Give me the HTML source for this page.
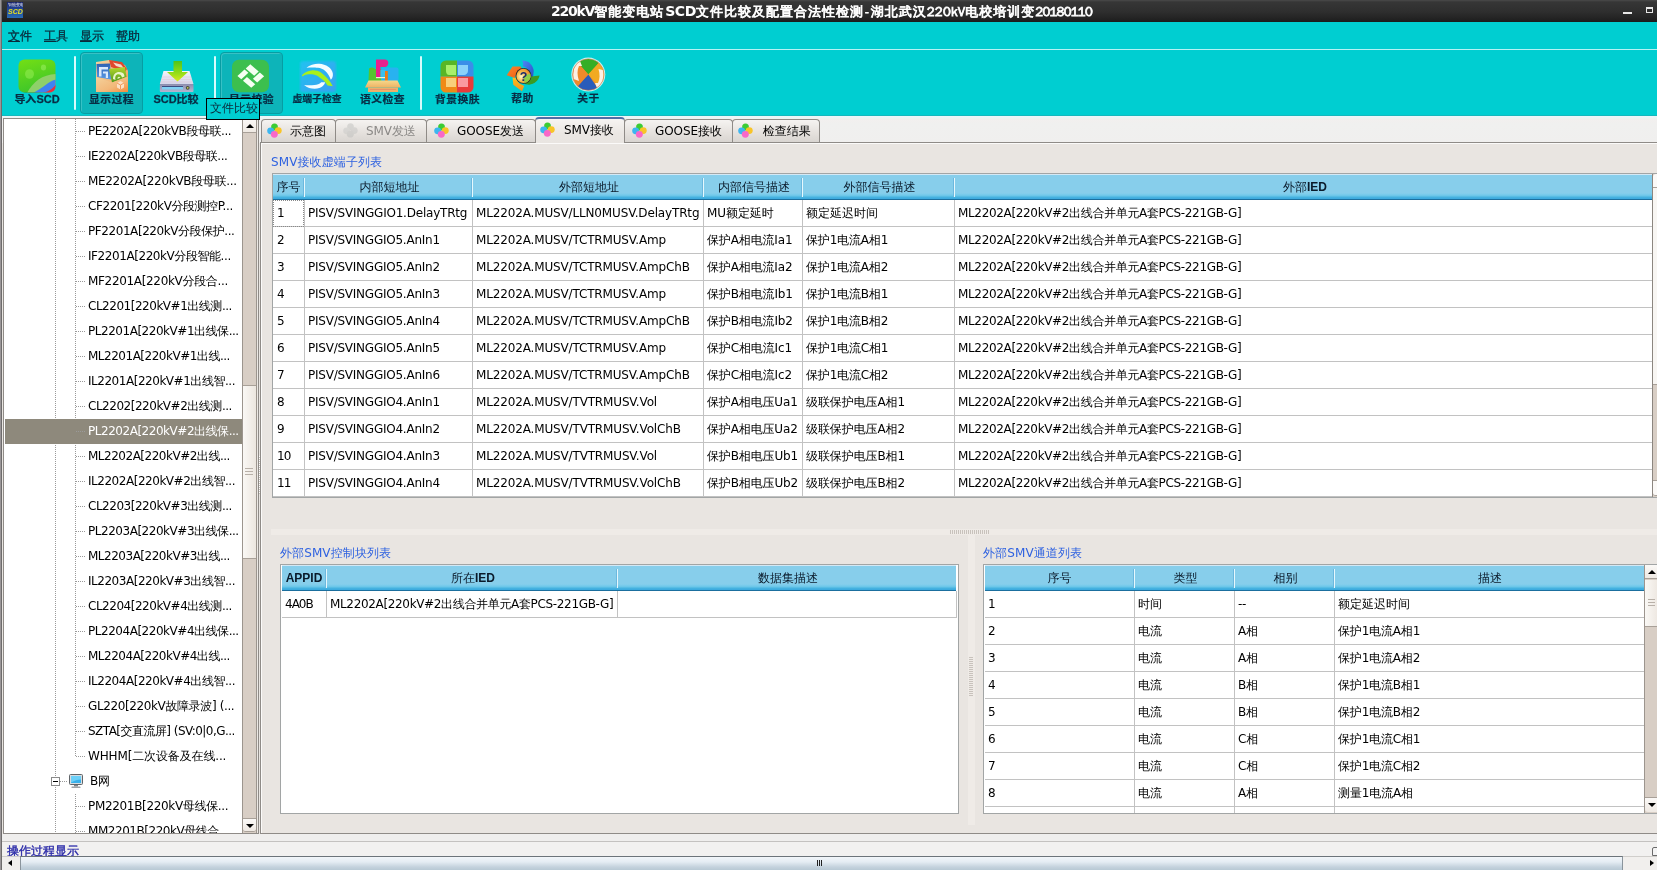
<!DOCTYPE html>
<html lang="zh-CN"><head><meta charset="utf-8"><title>SCD</title>
<style>
html,body{margin:0;padding:0}
body{width:1657px;height:870px;overflow:hidden;position:relative;background:#e9e5e1;font-family:'DejaVu Sans','WenQuanYi Zen Hei','Noto Sans CJK SC',sans-serif;font-size:12px;color:#000;line-height:1}
.abs{position:absolute}
div,span,td,th{box-sizing:border-box}
.mi{top:7px;font-size:12px;line-height:14px;color:#0a2a3a;white-space:nowrap;-webkit-text-stroke:0.3px #0a2a3a}
.mi::first-letter{text-decoration:underline}
.tbp{background:#0db4b9;border-radius:4px;border:1px solid #079da3;box-shadow:inset 1px 1px 0 rgba(255,255,255,0.18)}
.tsep{top:6px;width:2px;height:54px;background:#d8fbfb;border-radius:1px}
.tl{transform:scaleY(0.9);transform-origin:50% 95%;-webkit-text-stroke:0.25px #082c44;top:43px;text-align:center;font-weight:bold;font-size:11px;line-height:12px;color:#082c44;white-space:nowrap;font-family:'Liberation Sans','Noto Sans CJK SC',sans-serif}
.tla{font-size:11px;letter-spacing:0;display:inline-block;transform:scaleY(1.13);transform-origin:50% 78%}
.vdot{width:1px;background:repeating-linear-gradient(#9a9a9a 0,#9a9a9a 1px,transparent 1px,transparent 2px)}
.hdot{height:1px;background:repeating-linear-gradient(90deg,#9a9a9a 0,#9a9a9a 1px,transparent 1px,transparent 2px)}
.ti{height:25px;line-height:24px;white-space:nowrap;font-size:12px}
.tab{border:1px solid #8f8b87;border-bottom:none;border-radius:4px 4px 0 0;background:linear-gradient(#f5f3f1,#e6e2de 55%,#d9d5d1);white-space:nowrap}
.tabsel{background:linear-gradient(#f6f4f2,#ebe7e3 60%,#e9e5e1);border-top:2px solid #4f6ea6;z-index:5}
.tt{font-size:12px;line-height:16px}
.glabel{color:#2f62e0;font-size:12px;line-height:14px;white-space:nowrap}
.tblframe{background:#fff;border:1px solid #a2a5a5;overflow:hidden}
.thdr{background:linear-gradient(#d4e8f4 0,#d4e8f4 1px,#87ceeb 1px,#87ceeb 19px,#7ecdec 20px,#68c5e8 22px,#48b4e0 23px,#3aa8de 25px,#1b6f9e 25px,#1b6f9e 26px)}
.th{top:0;height:26px;line-height:27px;text-align:center;font-weight:bold;font-family:'Liberation Sans','WenQuanYi Zen Hei',sans-serif;font-size:12px;white-space:nowrap;color:#0a1a2a}
.th{font-weight:normal}
.th b{font-weight:bold}
.thsep{top:4px;width:1px;height:19px;background:#e6f8fd;box-shadow:-1px 0 0 #6cb8de}
.td{height:26px;line-height:27px;padding-left:4px;white-space:nowrap;overflow:hidden;font-size:12px}
.hline{height:1px;background:#c2c2c2}
.vline{width:1px;background:#c2c2c2}
.tb{font-family:'DejaVu Sans',sans-serif;font-weight:bold}
.tc{font-family:'WenQuanYi Zen Hei',sans-serif;font-weight:normal;letter-spacing:1px;-webkit-text-stroke:0.75px #fff}
.tn{font-family:'WenQuanYi Zen Hei',sans-serif;font-weight:normal;letter-spacing:0;-webkit-text-stroke:0.75px #fff}
#app{position:absolute;left:0;top:0;width:1657px;height:870px;overflow:hidden;will-change:transform;transform:translateZ(0)}

</style></head>
<body>
<div id="app">
<div class="abs" id="titlebar" style="left:0;top:0;width:1657px;height:22px;background:linear-gradient(#4a4a4a 0,#363636 2px,#2e2e2e 12px,#222 19px,#1a1a1a 22px)">
  <div class="abs" style="left:7px;top:2px;width:16px;height:16px;background:linear-gradient(#1a2468,#22489c 50%,#2a6cb4);overflow:hidden">
    <span class="abs" style="left:1px;top:1px;font-size:4px;color:#fff;font-weight:bold;line-height:4px;white-space:nowrap">智能变电站</span>
    <span class="abs" style="left:1px;top:6px;font-size:7px;color:#e8e020;font-weight:bold;font-style:italic;line-height:8px;font-family:'Liberation Sans',sans-serif">SCD</span>
  </div>
  <div class="abs" id="title" style="left:551px;top:3px;color:#fff;font-weight:bold;font-size:13px;line-height:16px;white-space:nowrap"><span class="tb" style="letter-spacing:-1.25px;font-size:14px">220kV</span><span class="tc">智能变电站</span><span class="tb" style="letter-spacing:-0.4px;font-size:14px;padding-left:1px">SCD</span><span class="tc">文件比较及配置合法性检测</span><span class="tn" style="padding:0 1.5px">-</span><span class="tc">湖北武汉</span><span class="tn" style="letter-spacing:0.26px">220kV</span><span class="tc">电校培训变</span><span class="tn" style="letter-spacing:-0.7px">20180110</span></div>
  <div class="abs" style="left:1623px;top:12px;width:9px;height:2px;background:#e8e8e8"></div>
  <div class="abs" style="left:1646px;top:7px;width:7px;height:6px;border:1px solid #e8e8e8;border-top-width:2px"></div>
</div>
<div class="abs" style="left:0;top:0;width:2px;height:870px;background:linear-gradient(90deg,#9a9698 0,#9a9698 1px,#6e6c6c 1px,#6e6c6c 2px);z-index:50"></div>

<div class="abs" id="menubar" style="left:2px;top:22px;width:1655px;height:27px;background:#00ced1">
  <span class="abs mi" style="left:6px">文件</span>
  <span class="abs mi" style="left:42px">工具</span>
  <span class="abs mi" style="left:78px">显示</span>
  <span class="abs mi" style="left:114px">帮助</span>
</div>
<div class="abs" style="left:2px;top:49px;width:1655px;height:1px;background:#b5f3f4"></div>

<div class="abs" style="left:2px;top:116px;width:1655px;height:27px;background:linear-gradient(#eef4fb 0,#eaf6f2 2px,#f2efee 3px,#f0f0ef 8px,#f0efee 100%)"></div>

<div class="abs" id="toolbar" style="left:2px;top:50px;width:1655px;height:66px;border-bottom:1px solid #14b8bc;background:#00ced1">
  <!-- pressed buttons -->
  <div class="abs tbp" style="left:78px;top:2px;width:63px;height:62px"></div>
  <div class="abs tbp" style="left:218px;top:2px;width:63px;height:62px"></div>
  <!-- separators -->
  <div class="abs tsep" style="left:72px"></div>
  <div class="abs tsep" style="left:212px"></div>
  <div class="abs tsep" style="left:418px"></div>

  <!-- 1 import SCD -->
  <svg class="abs" style="left:16px;top:9px" width="38" height="34" viewBox="0 0 38 34">
    <defs>
      <linearGradient id="g1" x1="0" y1="0" x2="0.3" y2="1"><stop offset="0" stop-color="#74df14"/><stop offset="1" stop-color="#3ec62a"/></linearGradient>
      <clipPath id="c1"><rect x="0.5" y="0.5" width="37" height="33" rx="6" ry="6"/></clipPath>
    </defs>
    <rect x="0.5" y="0.5" width="37" height="33" rx="6" ry="6" fill="url(#g1)"/>
    <g clip-path="url(#c1)">
      <path d="M9 34 C15 23 24 15.500 38 15 L38 34 Z" fill="#8fd06a"/>
      <path d="M15 34 C25 29 31 22 38 20.500 L38 34 Z" fill="#3f82f2"/>
      <path d="M25 34 C31 32.500 35.500 29 38 25.500 L38 34 Z" fill="#e8323c"/>
      <path d="M3 34 C12 33 24 34 36 34 L36 36 L3 36Z" fill="#2a6a30"/>
    </g>
    <ellipse cx="11.5" cy="15" rx="4.5" ry="4.8" fill="#9af05a" opacity="0.5"/>
    <ellipse cx="25.5" cy="8.5" rx="2.6" ry="3" fill="#a2f268" opacity="0.5"/>
  </svg>
  <div class="abs tl" style="left:4px;width:62px">导入<span class="tla">SCD</span></div>

  <!-- 2 show process -->
  <svg class="abs" style="left:93px;top:9px" width="34" height="34" viewBox="0 0 34 34">
    <defs>
      <linearGradient id="g2" x1="0" y1="0" x2="1" y2="1"><stop offset="0" stop-color="#f4d29c"/><stop offset="0.6" stop-color="#f2b87a"/><stop offset="1" stop-color="#f28c3c"/></linearGradient>
      <linearGradient id="g2b" x1="0" y1="0" x2="0" y2="1"><stop offset="0" stop-color="#2f62b4"/><stop offset="1" stop-color="#5a9ae6"/></linearGradient>
      <linearGradient id="g2g" x1="0" y1="0" x2="0" y2="1"><stop offset="0" stop-color="#b6d62c"/><stop offset="1" stop-color="#4f9a1c"/></linearGradient>
    </defs>
    <path d="M1 3 L14 1 L30 6 L33 12 L33 33 L1 33 Z" fill="url(#g2)"/>
    <path d="M14 1 L27 3 L32 10 L30 13 L16 8 Z" fill="#e0482c"/>
    <path d="M18 3.5 L26 5.5 L29 9.5 L21 7 Z" fill="#f6d8cc"/>
    <path d="M1.5 5 L15 4.5 L16 20.5 L2 18 Z" fill="url(#g2b)"/>
    <path d="M4 8 H13 V10.5 H6.5 V17.5 H4 Z M8 12.5 H13 V19 H10.8 V14.6 H8Z" fill="#dbe9fb"/>
    <path d="M14 10 L30 8 L31.5 18 L17 23.5 Z" fill="url(#g2g)"/>
    <path d="M18 20 C18 14 23 11.5 28 14 C29 15 29.5 16.5 29.5 17.5 L27 18.5 C26.5 15.5 24 14.5 22 15.5 C20 16.5 20 19 20.5 21 Z" fill="#eaf4c8"/>
    <path d="M22.5 20 C22.3 18 24 17 25.5 18.5Z" fill="#eaf4c8"/>
    <path d="M1 18 L17 23.5 L33 17.5 L33 33 L1 33Z" fill="url(#g2)"/>
    <path d="M22 24 l3.5 -2 l3.5 2 v4.5 l-3.5 2 l-3.5 -2z" fill="#fbe6cf" opacity="0.9"/>
    <path d="M22 24 l3.5 2 l3.5 -2 M25.5 26 v4.5" stroke="#f29a58" stroke-width="1" fill="none"/>
  </svg>
  <div class="abs tl" style="left:78px;width:63px;font-size:10.8px;letter-spacing:0.4px">显示过程</div>

  <!-- 3 SCD compare -->
  <svg class="abs" style="left:157px;top:10px" width="36" height="33" viewBox="0 0 36 33">
    <defs>
      <linearGradient id="g3" x1="0" y1="0" x2="0" y2="1"><stop offset="0" stop-color="#4fc41a"/><stop offset="0.55" stop-color="#8fdc18"/><stop offset="1" stop-color="#d8e81c"/></linearGradient>
      <linearGradient id="g3b" x1="0" y1="0" x2="0" y2="1"><stop offset="0" stop-color="#f4f2fa"/><stop offset="1" stop-color="#d4d6ea"/></linearGradient>
      <linearGradient id="g3c" x1="0" y1="0" x2="0" y2="1"><stop offset="0" stop-color="#8c8cae"/><stop offset="1" stop-color="#b4b6d0"/></linearGradient>
    </defs>
    <path d="M4.5 11 L30.5 11 L34.5 24 L0.8 24 Z" fill="url(#g3b)"/>
    <path d="M3 17 H32 M2.4 19.5 H32.8 M1.8 22 H33.6" stroke="#e0c8d8" stroke-width="0.6"/>
    <rect x="0.8" y="24" width="33.7" height="8" rx="1" fill="url(#g3c)"/>
    <rect x="3" y="26.3" width="21" height="3.2" fill="#7fd0f4"/>
    <rect x="3" y="26" width="21" height="1" fill="#3c4a80"/>
    <circle cx="28.7" cy="27.8" r="1.9" fill="#4a4a3a"/><circle cx="28.7" cy="27.8" r="0.9" fill="#c8d050"/>
    <path d="M14.5 1 H23 V12 H29 L18.5 21.6 L8 12 H14.5 Z" fill="url(#g3)"/>
  </svg>
  <div class="abs tl" style="left:143px;width:62px"><span class="tla">SCD</span>比较</div>

  <!-- 4 show verify -->
  <svg class="abs" style="left:229px;top:9px" width="39" height="34" viewBox="0 0 39 34">
    <rect x="1" y="0.8" width="37" height="32.4" rx="7" ry="7" fill="#3cbf4e"/>
    <g transform="matrix(13.84 11.9 -12.87 11.58 19.3 5.3)" fill="#f6fff2">
      <rect x="0" y="0" width="0.61" height="0.355"/>
      <rect x="0.69" y="0" width="0.31" height="0.54"/>
      <rect x="0.40" y="0.69" width="0.60" height="0.31"/>
      <rect x="0" y="0.45" width="0.28" height="0.55"/>
    </g>
  </svg>
  <div class="abs tl" style="left:218px;width:63px;font-size:10.8px;letter-spacing:0.4px">显示校验</div>

  <!-- 5 virtual terminal check -->
  <svg class="abs" style="left:297px;top:10px" width="38" height="33" viewBox="0 0 38 33">
    <defs>
      <linearGradient id="g5" x1="0" y1="0" x2="1" y2="1"><stop offset="0" stop-color="#22c2f0"/><stop offset="1" stop-color="#3a9ef2"/></linearGradient>
      <filter id="f5" x="-10%" y="-10%" width="120%" height="120%"><feGaussianBlur stdDeviation="0.8"/></filter>
      <filter id="f5b" x="-10%" y="-10%" width="120%" height="120%"><feGaussianBlur stdDeviation="0.35"/></filter>
    </defs>
    <rect x="1" y="1" width="36" height="31" rx="3" fill="url(#g5)" filter="url(#f5)"/>
    <g filter="url(#f5b)">
    <path d="M7.400 7.800 C11 4.500 16 3.500 20.200 3.700 C27 4 33 8 33.800 13.300 C34.200 16 33.500 18.500 31.800 19.700 C30.500 16 29 13.500 26 10.700 C24 9 21.500 8 19 7.800 C16 7.400 11 7.200 7.400 7.800 Z" fill="#f4fcff"/>
    <path d="M5.100 24.900 C8 27.500 12 28.700 15.700 28.700 C19 28.700 22 27.700 23.500 26.200 C25 25 26 23.500 26 22.300 L22.200 22.300 C20.500 24 18 24.900 15.700 24.900 C12 25.200 8 25.200 5.100 24.900 Z" fill="#f4fcff"/>
    <path d="M2.900 15.200 C5 12.500 9 11 12.500 10.400 C16 10 19.500 11 22 12.500 C27 16 31 21 33.800 26.200 L28.600 25.500 C26.500 22 24 19.500 20.900 17.800 C19 16 16.500 15 14.500 14.600 C12 14.200 10 14.300 8 14.600 C6 15 4.500 15.800 3.500 16.500 Z" fill="#a8f01c"/>
    </g>
  </svg>
  <div class="abs tl" style="left:283px;width:64px;font-size:9.8px">虚端子检查</div>

  <!-- 6 semantic check -->
  <svg class="abs" style="left:362px;top:8px" width="38" height="35" viewBox="0 0 38 35">
    <defs>
      <linearGradient id="g6" x1="0" y1="0" x2="0" y2="1"><stop offset="0" stop-color="#f6d88a"/><stop offset="1" stop-color="#eeb264"/></linearGradient>
    </defs>
    <path d="M5 10.500 C7 9 10 9.500 11 11 L20 11 V23 H4.500 Z" fill="#56c62e"/>
    <path d="M12 1.500 H21 C25 1.500 25.500 7 22 9 H16.500 V19 H12 Z" fill="#e8208c"/>
    <rect x="17" y="9.500" width="17.500" height="14" rx="2" fill="#28b2f0"/>
    <rect x="16.500" y="12" width="5" height="8" fill="#38c0f0"/>
    <rect x="21" y="13" width="2.800" height="10" fill="#f07a12"/>
    <path d="M12 19 h9 v1.200 h-9z" fill="#f4f4d0"/>
    <path d="M4.500 22.500 H33.500 L37 29.500 H1 Z" fill="url(#g6)"/>
    <path d="M4 29.500 H34 V34 H4 Z" fill="#eeb06a"/>
    <path d="M6 31.500 H32" stroke="#e8926a" stroke-width="1"/>
  </svg>
  <div class="abs tl" style="left:349px;width:63px;font-size:10.8px;letter-spacing:0.4px">语义检查</div>

  <!-- 7 skin -->
  <svg class="abs" style="left:438px;top:10px" width="34" height="33" viewBox="0 0 34 33">
    <defs>
      <clipPath id="c7"><rect x="0.500" y="0.500" width="33" height="32" rx="5.500"/></clipPath>
      <filter id="f7"><feGaussianBlur stdDeviation="0.5"/></filter>
    </defs>
    <g clip-path="url(#c7)" filter="url(#f7)">
      <rect x="0" y="0" width="17" height="16.500" fill="#58b628"/>
      <rect x="17" y="0" width="17" height="16.500" fill="#3a8ee8"/>
      <rect x="0" y="16.500" width="17" height="16.500" fill="#f08a16"/>
      <rect x="17" y="16.500" width="17" height="16.500" fill="#e83a3a"/>
      <path d="M6 5 H16 V15 H9 C7 15 6 13 6 11Z" fill="#a8f06a"/>
      <path d="M18 5 H28 V11 C28 13 26 15 24 15 H18Z" fill="#8ad2fa"/>
      <path d="M6 18 H16 V27 H6Z" fill="#f8d07a"/>
      <path d="M18 18 H28 V27 H18Z" fill="#fa9aa0"/>
    </g>
  </svg>
  <div class="abs tl" style="left:424px;width:63px;font-size:10.8px;letter-spacing:0.4px">背景换肤</div>

  <!-- 8 help -->
  <svg class="abs" style="left:503px;top:8px" width="38" height="36" viewBox="0 0 38 36">
    <defs>
      <radialGradient id="g8" cx="0.35" cy="0.55" r="0.75"><stop offset="0" stop-color="#fff6c8"/><stop offset="0.45" stop-color="#f6b848"/><stop offset="1" stop-color="#e87a20"/></radialGradient>
      <linearGradient id="g8o" x1="0" y1="0" x2="1" y2="1"><stop offset="0" stop-color="#f8862a"/><stop offset="1" stop-color="#f25a14"/></linearGradient>
      <linearGradient id="g8b" x1="0" y1="0" x2="1" y2="1"><stop offset="0" stop-color="#4a8af4"/><stop offset="1" stop-color="#2a50c8"/></linearGradient>
      <linearGradient id="g8y" x1="0" y1="0" x2="0" y2="1"><stop offset="0" stop-color="#fcc020"/><stop offset="1" stop-color="#f6921a"/></linearGradient>
      <filter id="f8"><feGaussianBlur stdDeviation="0.45"/></filter>
    </defs>
    <g filter="url(#f8)">
      <path d="M1.700 17.200 L7.500 8.400 L15.600 8.400 L17.800 12.800 L11.900 15 L9.700 20.100 Z" fill="url(#g8o)"/>
      <path d="M17 2.600 C21 2.600 24 4 25.100 5.500 C27.500 8 28.500 10.500 28.700 12.800 L28 19.400 L24.300 17.900 C24 14 23 12 22.100 10.600 C21 9.300 19.500 8.600 17.800 8.400 C18.500 6 18 4 17 2.600 Z" fill="url(#g8b)"/>
      <path d="M26.500 18.600 L34.600 17.500 C34 20.500 32.500 22.500 30.900 23.800 C29 25.500 26.500 26.500 24.300 26.700 L19.200 25.900 Z" fill="#3a9a22"/>
      <path d="M7.500 19.400 L8.300 26.700 L17 33.300 L19.200 28.100 L14.100 25.200 L10.500 20.100 Z" fill="url(#g8y)"/>
      <circle cx="18.500" cy="17.900" r="7.900" fill="#2a2a30"/>
      <circle cx="18.500" cy="17.900" r="7.100" fill="url(#g8)"/>
      <path d="M18.500 17.900 L25.300 15.600 A7.100 7.100 0 0 1 19.500 24.900 Z" fill="#8ed04a"/>
    </g>
    <text x="18.500" y="22.600" text-anchor="middle" font-family="'Liberation Sans',sans-serif" font-weight="bold" font-size="12.5" fill="#1c2c6a">?</text>
  </svg>
  <div class="abs tl" style="left:489px;width:63px;font-size:10.8px;letter-spacing:0.4px;top:42px">帮助</div>

  <!-- 9 about -->
  <svg class="abs" style="left:568px;top:7px" width="38" height="38" viewBox="0 0 38 38">
    <defs>
      <clipPath id="c9"><circle cx="18.300" cy="17.600" r="15.600"/></clipPath>
      <filter id="f9"><feGaussianBlur stdDeviation="0.5"/></filter>
    </defs>
    <circle cx="18.300" cy="17.600" r="17" fill="#c8f4f0"/>
    <g clip-path="url(#c9)" filter="url(#f9)">
      <rect x="0" y="0" width="38" height="38" fill="#f0902a"/>
      <path d="M18.300 17.600 L2 -1 H35 Z" fill="#36ae26"/>
      <path d="M18.300 17.600 L35 -1 V36 Z" fill="#f2aa22"/>
      <path d="M18.300 17.600 L31 36 H4 L6 30 Z" fill="#2a5cba"/>
      <path d="M18.300 17.600 L2 36 V-1 Z" fill="#f08a2a"/>
      <path d="M3.500 22 C2.500 13 5 6 10 4 L12 9 L9 9 C7 13 7 18 9 24 Z" fill="#fdf0e4"/>
      <path d="M33 13 C34.500 21 32 28 27 31 L25 26 L28 26 C30 22 30 17 28.500 12 Z" fill="#fdf0e4"/>
    </g>
    <circle cx="18.300" cy="17.600" r="15.800" fill="none" stroke="#d86a3a" stroke-width="0.800" opacity="0.7"/>
  </svg>
  <div class="abs tl" style="left:555px;width:63px;font-size:10.8px;letter-spacing:0.4px;top:41.500px">关于</div>

  <!-- tooltip -->
  <div class="abs" style="left:204px;top:48px;width:54px;height:22px;border:1px solid #000;background:#00ced1;z-index:60;font-size:12px;line-height:14px;padding:2px 0 0 3px;color:#0a2a3a;white-space:nowrap">文件比较</div>
</div>

<div class="abs" id="tree" style="left:3px;top:118px;width:256px;height:716px;background:#fff;border:1px solid #8f8b87;overflow:hidden">
<div class="abs" style="left:0;top:0;width:238px;height:714px;overflow:hidden">
<div class="abs vdot" style="left:51px;top:0;height:714px"></div>
<div class="abs vdot" style="left:71px;top:0;height:638px"></div>
<div class="abs vdot" style="left:71px;top:675px;height:39px"></div>
<div class="abs hdot" style="left:72px;top:12px;width:9px"></div>
<div class="abs ti" style="left:84px;top:0px"><span style="letter-spacing:-0.44px">PE2202A[220kVB段母联...</span></div>
<div class="abs hdot" style="left:72px;top:37px;width:9px"></div>
<div class="abs ti" style="left:84px;top:25px"><span style="letter-spacing:-0.44px">IE2202A[220kVB段母联...</span></div>
<div class="abs hdot" style="left:72px;top:62px;width:9px"></div>
<div class="abs ti" style="left:84px;top:50px"><span style="letter-spacing:-0.32px">ME2202A[220kVB段母联...</span></div>
<div class="abs hdot" style="left:72px;top:87px;width:9px"></div>
<div class="abs ti" style="left:84px;top:75px"><span style="letter-spacing:-0.43px">CF2201[220kV分段测控P...</span></div>
<div class="abs hdot" style="left:72px;top:112px;width:9px"></div>
<div class="abs ti" style="left:84px;top:100px"><span style="letter-spacing:-0.43px">PF2201A[220kV分段保护...</span></div>
<div class="abs hdot" style="left:72px;top:137px;width:9px"></div>
<div class="abs ti" style="left:84px;top:125px"><span style="letter-spacing:-0.43px">IF2201A[220kV分段智能...</span></div>
<div class="abs hdot" style="left:72px;top:162px;width:9px"></div>
<div class="abs ti" style="left:84px;top:150px"><span style="letter-spacing:-0.33px">MF2201A[220kV分段合...</span></div>
<div class="abs hdot" style="left:72px;top:187px;width:9px"></div>
<div class="abs ti" style="left:84px;top:175px"><span style="letter-spacing:-0.48px">CL2201[220kV#1出线测...</span></div>
<div class="abs hdot" style="left:72px;top:212px;width:9px"></div>
<div class="abs ti" style="left:84px;top:200px"><span style="letter-spacing:-0.47px">PL2201A[220kV#1出线保...</span></div>
<div class="abs hdot" style="left:72px;top:237px;width:9px"></div>
<div class="abs ti" style="left:84px;top:225px"><span style="letter-spacing:-0.49px">ML2201A[220kV#1出线...</span></div>
<div class="abs hdot" style="left:72px;top:262px;width:9px"></div>
<div class="abs ti" style="left:84px;top:250px"><span style="letter-spacing:-0.47px">IL2201A[220kV#1出线智...</span></div>
<div class="abs hdot" style="left:72px;top:287px;width:9px"></div>
<div class="abs ti" style="left:84px;top:275px"><span style="letter-spacing:-0.48px">CL2202[220kV#2出线测...</span></div>
<div class="abs" style="left:1px;top:300px;width:237px;height:25px;background:#8e897c"></div>
<div class="abs hdot" style="left:72px;top:312px;width:9px"></div>
<div class="abs ti" style="left:84px;top:300px;color:#fff"><span style="letter-spacing:-0.47px">PL2202A[220kV#2出线保...</span></div>
<div class="abs hdot" style="left:72px;top:337px;width:9px"></div>
<div class="abs ti" style="left:84px;top:325px"><span style="letter-spacing:-0.49px">ML2202A[220kV#2出线...</span></div>
<div class="abs hdot" style="left:72px;top:362px;width:9px"></div>
<div class="abs ti" style="left:84px;top:350px"><span style="letter-spacing:-0.47px">IL2202A[220kV#2出线智...</span></div>
<div class="abs hdot" style="left:72px;top:387px;width:9px"></div>
<div class="abs ti" style="left:84px;top:375px"><span style="letter-spacing:-0.48px">CL2203[220kV#3出线测...</span></div>
<div class="abs hdot" style="left:72px;top:412px;width:9px"></div>
<div class="abs ti" style="left:84px;top:400px"><span style="letter-spacing:-0.47px">PL2203A[220kV#3出线保...</span></div>
<div class="abs hdot" style="left:72px;top:437px;width:9px"></div>
<div class="abs ti" style="left:84px;top:425px"><span style="letter-spacing:-0.49px">ML2203A[220kV#3出线...</span></div>
<div class="abs hdot" style="left:72px;top:462px;width:9px"></div>
<div class="abs ti" style="left:84px;top:450px"><span style="letter-spacing:-0.47px">IL2203A[220kV#3出线智...</span></div>
<div class="abs hdot" style="left:72px;top:487px;width:9px"></div>
<div class="abs ti" style="left:84px;top:475px"><span style="letter-spacing:-0.48px">CL2204[220kV#4出线测...</span></div>
<div class="abs hdot" style="left:72px;top:512px;width:9px"></div>
<div class="abs ti" style="left:84px;top:500px"><span style="letter-spacing:-0.47px">PL2204A[220kV#4出线保...</span></div>
<div class="abs hdot" style="left:72px;top:537px;width:9px"></div>
<div class="abs ti" style="left:84px;top:525px"><span style="letter-spacing:-0.49px">ML2204A[220kV#4出线...</span></div>
<div class="abs hdot" style="left:72px;top:562px;width:9px"></div>
<div class="abs ti" style="left:84px;top:550px"><span style="letter-spacing:-0.47px">IL2204A[220kV#4出线智...</span></div>
<div class="abs hdot" style="left:72px;top:587px;width:9px"></div>
<div class="abs ti" style="left:84px;top:575px"><span style="letter-spacing:-0.38px">GL220[220kV故障录波] (...</span></div>
<div class="abs hdot" style="left:72px;top:612px;width:9px"></div>
<div class="abs ti" style="left:84px;top:600px"><span style="letter-spacing:-0.53px">SZTA[交直流屏] (SV:0|0,G...</span></div>
<div class="abs hdot" style="left:72px;top:637px;width:9px"></div>
<div class="abs ti" style="left:84px;top:625px"><span style="letter-spacing:-0.14px">WHHM[二次设备及在线...</span></div>
<div class="abs hdot" style="left:56px;top:662px;width:8px"></div>
<div class="abs" style="left:47px;top:658px;width:9px;height:9px;border:1px solid #8a8a8a;background:#fff"><div class="abs" style="left:1px;top:3px;width:5px;height:1px;background:#000"></div></div>
<svg class="abs" style="left:64px;top:654px" width="16" height="16" viewBox="0 0 16 16"><rect x="1.5" y="1.5" width="13" height="10" rx="1" fill="#d8dce0" stroke="#606468" stroke-width="1"/><rect x="3" y="3" width="10" height="7" fill="#38b0ea"/><path d="M3 3h10v3.500c-4 0-6 1-10 3z" fill="#6cd0f8"/><rect x="6" y="12" width="4" height="1.500" fill="#808488"/><rect x="3.500" y="13.500" width="9" height="1.500" rx="0.500" fill="#a0a4a8"/></svg>
<div class="abs ti" style="left:86px;top:650px"><span style="letter-spacing:-0.25px">B网</span></div>
<div class="abs hdot" style="left:72px;top:687px;width:9px"></div>
<div class="abs ti" style="left:84px;top:675px"><span style="letter-spacing:-0.33px">PM2201B[220kV母线保...</span></div>
<div class="abs hdot" style="left:72px;top:712px;width:9px"></div>
<div class="abs ti" style="left:84px;top:700px"><span style="letter-spacing:-0.46px">MM2201B[220kV母线合...</span></div>
</div>
<div class="abs" style="left:238px;top:0;width:15px;height:714px;background:#d8cec5;border-left:1px solid #9c958e;border-right:1px solid #9c958e"></div>
<div class="abs" style="left:239px;top:0;width:13px;height:14px;background:linear-gradient(#fbf9f7,#efe9e3);border-bottom:1px solid #a8a098"></div>
<div class="abs" style="left:242px;top:5px;width:0;height:0;border-left:4px solid transparent;border-right:4px solid transparent;border-bottom:4.5px solid #000"></div>
<div class="abs" style="left:239px;top:266px;width:13px;height:174px;background:linear-gradient(90deg,#faf8f5,#ece6df);border-top:1px solid #a8a098;border-bottom:1px solid #a8a098"></div>
<div class="abs" style="left:241px;top:349px;width:8px;height:7px;background:repeating-linear-gradient(#b8b0a8 0,#b8b0a8 1px,transparent 1px,transparent 3px)"></div>
<div class="abs" style="left:239px;top:699px;width:13px;height:14px;background:linear-gradient(#fbf9f7,#efe9e3);border:1px solid #a8a098;border-width:1px 0 1px 0;border-radius:0 0 3px 3px"></div>
<div class="abs" style="left:242px;top:705px;width:0;height:0;border-left:4px solid transparent;border-right:4px solid transparent;border-top:4.5px solid #000"></div>
<div class="abs" style="left:253px;top:0;width:3px;height:714px;background:#ece8e4"></div>
</div>
<div class="abs" id="pane" style="left:260px;top:142px;width:1400px;height:692px;background:#e9e5e1;border:1px solid #8f8b87;box-shadow:inset 1px 1px 0 #fbfaf9"></div>
<div class="abs tab" style="left:261px;top:119px;width:75px;height:23px"><svg class="abs" style="left:4.5px;top:3px" width="15" height="15" viewBox="0 0 16 16"><g ><ellipse cx="8" cy="4.200" rx="3.600" ry="3.800" fill="#3ccc34"/><ellipse cx="3.900" cy="8.300" rx="3.700" ry="3.600" fill="#3cb6f0"/><ellipse cx="12" cy="8" rx="3.700" ry="3.600" fill="#f8c428"/><ellipse cx="7.800" cy="12" rx="3.700" ry="3.600" fill="#f868c8"/></g></svg><span class="abs tt" style="left:28.0px;top:3px">示意图</span></div>
<div class="abs tab" style="left:335px;top:119px;width:92px;height:23px"><svg class="abs" style="left:7.0px;top:3px" width="15" height="15" viewBox="0 0 16 16"><g opacity="0.55"><ellipse cx="8" cy="4.200" rx="3.600" ry="3.800" fill="#c4c4c2"/><ellipse cx="3.900" cy="8.300" rx="3.700" ry="3.600" fill="#cacac8"/><ellipse cx="12" cy="8" rx="3.700" ry="3.600" fill="#c6c6c4"/><ellipse cx="7.800" cy="12" rx="3.700" ry="3.600" fill="#c2c2c0"/></g></svg><span class="abs tt" style="left:30.0px;top:3px;color:#8a8886"><span style="letter-spacing:-0.08px">SMV发送</span></span></div>
<div class="abs tab" style="left:426px;top:119px;width:110px;height:23px"><svg class="abs" style="left:7.0px;top:3px" width="15" height="15" viewBox="0 0 16 16"><g ><ellipse cx="8" cy="4.200" rx="3.600" ry="3.800" fill="#3ccc34"/><ellipse cx="3.900" cy="8.300" rx="3.700" ry="3.600" fill="#3cb6f0"/><ellipse cx="12" cy="8" rx="3.700" ry="3.600" fill="#f8c428"/><ellipse cx="7.800" cy="12" rx="3.700" ry="3.600" fill="#f868c8"/></g></svg><span class="abs tt" style="left:30.0px;top:3px"><span style="letter-spacing:-0.08px">GOOSE发送</span></span></div>
<div class="abs tab tabsel" style="left:535px;top:117px;width:90px;height:26px"><svg class="abs" style="left:4.0px;top:3px" width="15" height="15" viewBox="0 0 16 16"><g ><ellipse cx="8" cy="4.200" rx="3.600" ry="3.800" fill="#3ccc34"/><ellipse cx="3.900" cy="8.300" rx="3.700" ry="3.600" fill="#3cb6f0"/><ellipse cx="12" cy="8" rx="3.700" ry="3.600" fill="#f8c428"/><ellipse cx="7.800" cy="12" rx="3.700" ry="3.600" fill="#f868c8"/></g></svg><span class="abs tt" style="left:28.0px;top:3px"><span style="letter-spacing:-0.08px">SMV接收</span></span></div>
<div class="abs tab" style="left:624px;top:119px;width:109px;height:23px"><svg class="abs" style="left:6.5px;top:3px" width="15" height="15" viewBox="0 0 16 16"><g ><ellipse cx="8" cy="4.200" rx="3.600" ry="3.800" fill="#3ccc34"/><ellipse cx="3.900" cy="8.300" rx="3.700" ry="3.600" fill="#3cb6f0"/><ellipse cx="12" cy="8" rx="3.700" ry="3.600" fill="#f8c428"/><ellipse cx="7.800" cy="12" rx="3.700" ry="3.600" fill="#f868c8"/></g></svg><span class="abs tt" style="left:30.0px;top:3px"><span style="letter-spacing:-0.08px">GOOSE接收</span></span></div>
<div class="abs tab" style="left:732px;top:119px;width:88px;height:23px"><svg class="abs" style="left:5.0px;top:3px" width="15" height="15" viewBox="0 0 16 16"><g ><ellipse cx="8" cy="4.200" rx="3.600" ry="3.800" fill="#3ccc34"/><ellipse cx="3.900" cy="8.300" rx="3.700" ry="3.600" fill="#3cb6f0"/><ellipse cx="12" cy="8" rx="3.700" ry="3.600" fill="#f8c428"/><ellipse cx="7.800" cy="12" rx="3.700" ry="3.600" fill="#f868c8"/></g></svg><span class="abs tt" style="left:29.7px;top:3px">检查结果</span></div>
<div class="abs" style="left:259px;top:456px;width:1px;height:38px;background:repeating-linear-gradient(#fff 0,#fff 1px,#c8c2bc 1px,#c8c2bc 2px)"></div>
<div class="abs glabel" style="left:271px;top:155px"><span style="letter-spacing:0.10px">SMV接收虚端子列表</span></div>
<div class="abs tblframe" id="t1" style="left:272px;top:173px;width:1390px;height:325px">
<div class="abs thdr" style="left:0px;top:0;width:1380px;height:26px"><div class="abs th" style="left:0px;width:31px">序号</div><div class="abs thsep" style="left:31px"></div><div class="abs th" style="left:31px;width:168px;padding-left:3px">内部短地址</div><div class="abs thsep" style="left:199px"></div><div class="abs th" style="left:199px;width:231px;padding-left:3px">外部短地址</div><div class="abs thsep" style="left:430px"></div><div class="abs th" style="left:430px;width:99px;padding-left:3px">内部信号描述</div><div class="abs thsep" style="left:529px"></div><div class="abs th" style="left:529px;width:152px;padding-left:3px">外部信号描述</div><div class="abs thsep" style="left:681px"></div><div class="abs th" style="left:681px;width:699px;padding-left:3px">外部<b>IED</b></div></div>
<div class="abs td" style="left:0px;top:26px;width:31px">1</div>
<div class="abs td" style="left:31px;top:26px;width:168px"><span style="letter-spacing:-0.22px">PISV/SVINGGIO1.DelayTRtg</span></div>
<div class="abs td" style="left:199px;top:26px;width:231px"><span style="letter-spacing:-0.15px">ML2202A.MUSV/LLN0MUSV.DelayTRtg</span></div>
<div class="abs td" style="left:430px;top:26px;width:99px"><span style="letter-spacing:-0.08px">MU额定延时</span></div>
<div class="abs td" style="left:529px;top:26px;width:152px">额定延迟时间</div>
<div class="abs td" style="left:681px;top:26px;width:699px"><span style="letter-spacing:-0.34px">ML2202A[220kV#2出线合并单元A套PCS-221GB-G]</span></div>
<div class="abs hline" style="left:0px;top:52px;width:1380px"></div>
<div class="abs td" style="left:0px;top:53px;width:31px">2</div>
<div class="abs td" style="left:31px;top:53px;width:168px"><span style="letter-spacing:-0.24px">PISV/SVINGGIO5.AnIn1</span></div>
<div class="abs td" style="left:199px;top:53px;width:231px"><span style="letter-spacing:-0.15px">ML2202A.MUSV/TCTRMUSV.Amp</span></div>
<div class="abs td" style="left:430px;top:53px;width:99px"><span style="letter-spacing:-0.14px">保护A相电流Ia1</span></div>
<div class="abs td" style="left:529px;top:53px;width:152px"><span style="letter-spacing:-0.17px">保护1电流A相1</span></div>
<div class="abs td" style="left:681px;top:53px;width:699px"><span style="letter-spacing:-0.34px">ML2202A[220kV#2出线合并单元A套PCS-221GB-G]</span></div>
<div class="abs hline" style="left:0px;top:79px;width:1380px"></div>
<div class="abs td" style="left:0px;top:80px;width:31px">3</div>
<div class="abs td" style="left:31px;top:80px;width:168px"><span style="letter-spacing:-0.24px">PISV/SVINGGIO5.AnIn2</span></div>
<div class="abs td" style="left:199px;top:80px;width:231px"><span style="letter-spacing:-0.15px">ML2202A.MUSV/TCTRMUSV.AmpChB</span></div>
<div class="abs td" style="left:430px;top:80px;width:99px"><span style="letter-spacing:-0.14px">保护A相电流Ia2</span></div>
<div class="abs td" style="left:529px;top:80px;width:152px"><span style="letter-spacing:-0.17px">保护1电流A相2</span></div>
<div class="abs td" style="left:681px;top:80px;width:699px"><span style="letter-spacing:-0.34px">ML2202A[220kV#2出线合并单元A套PCS-221GB-G]</span></div>
<div class="abs hline" style="left:0px;top:106px;width:1380px"></div>
<div class="abs td" style="left:0px;top:107px;width:31px">4</div>
<div class="abs td" style="left:31px;top:107px;width:168px"><span style="letter-spacing:-0.24px">PISV/SVINGGIO5.AnIn3</span></div>
<div class="abs td" style="left:199px;top:107px;width:231px"><span style="letter-spacing:-0.15px">ML2202A.MUSV/TCTRMUSV.Amp</span></div>
<div class="abs td" style="left:430px;top:107px;width:99px"><span style="letter-spacing:-0.14px">保护B相电流Ib1</span></div>
<div class="abs td" style="left:529px;top:107px;width:152px"><span style="letter-spacing:-0.17px">保护1电流B相1</span></div>
<div class="abs td" style="left:681px;top:107px;width:699px"><span style="letter-spacing:-0.34px">ML2202A[220kV#2出线合并单元A套PCS-221GB-G]</span></div>
<div class="abs hline" style="left:0px;top:133px;width:1380px"></div>
<div class="abs td" style="left:0px;top:134px;width:31px">5</div>
<div class="abs td" style="left:31px;top:134px;width:168px"><span style="letter-spacing:-0.24px">PISV/SVINGGIO5.AnIn4</span></div>
<div class="abs td" style="left:199px;top:134px;width:231px"><span style="letter-spacing:-0.15px">ML2202A.MUSV/TCTRMUSV.AmpChB</span></div>
<div class="abs td" style="left:430px;top:134px;width:99px"><span style="letter-spacing:-0.14px">保护B相电流Ib2</span></div>
<div class="abs td" style="left:529px;top:134px;width:152px"><span style="letter-spacing:-0.17px">保护1电流B相2</span></div>
<div class="abs td" style="left:681px;top:134px;width:699px"><span style="letter-spacing:-0.34px">ML2202A[220kV#2出线合并单元A套PCS-221GB-G]</span></div>
<div class="abs hline" style="left:0px;top:160px;width:1380px"></div>
<div class="abs td" style="left:0px;top:161px;width:31px">6</div>
<div class="abs td" style="left:31px;top:161px;width:168px"><span style="letter-spacing:-0.24px">PISV/SVINGGIO5.AnIn5</span></div>
<div class="abs td" style="left:199px;top:161px;width:231px"><span style="letter-spacing:-0.15px">ML2202A.MUSV/TCTRMUSV.Amp</span></div>
<div class="abs td" style="left:430px;top:161px;width:99px"><span style="letter-spacing:-0.14px">保护C相电流Ic1</span></div>
<div class="abs td" style="left:529px;top:161px;width:152px"><span style="letter-spacing:-0.17px">保护1电流C相1</span></div>
<div class="abs td" style="left:681px;top:161px;width:699px"><span style="letter-spacing:-0.34px">ML2202A[220kV#2出线合并单元A套PCS-221GB-G]</span></div>
<div class="abs hline" style="left:0px;top:187px;width:1380px"></div>
<div class="abs td" style="left:0px;top:188px;width:31px">7</div>
<div class="abs td" style="left:31px;top:188px;width:168px"><span style="letter-spacing:-0.24px">PISV/SVINGGIO5.AnIn6</span></div>
<div class="abs td" style="left:199px;top:188px;width:231px"><span style="letter-spacing:-0.15px">ML2202A.MUSV/TCTRMUSV.AmpChB</span></div>
<div class="abs td" style="left:430px;top:188px;width:99px"><span style="letter-spacing:-0.14px">保护C相电流Ic2</span></div>
<div class="abs td" style="left:529px;top:188px;width:152px"><span style="letter-spacing:-0.17px">保护1电流C相2</span></div>
<div class="abs td" style="left:681px;top:188px;width:699px"><span style="letter-spacing:-0.34px">ML2202A[220kV#2出线合并单元A套PCS-221GB-G]</span></div>
<div class="abs hline" style="left:0px;top:214px;width:1380px"></div>
<div class="abs td" style="left:0px;top:215px;width:31px">8</div>
<div class="abs td" style="left:31px;top:215px;width:168px"><span style="letter-spacing:-0.24px">PISV/SVINGGIO4.AnIn1</span></div>
<div class="abs td" style="left:199px;top:215px;width:231px"><span style="letter-spacing:-0.15px">ML2202A.MUSV/TVTRMUSV.Vol</span></div>
<div class="abs td" style="left:430px;top:215px;width:99px"><span style="letter-spacing:-0.14px">保护A相电压Ua1</span></div>
<div class="abs td" style="left:529px;top:215px;width:152px"><span style="letter-spacing:-0.09px">级联保护电压A相1</span></div>
<div class="abs td" style="left:681px;top:215px;width:699px"><span style="letter-spacing:-0.34px">ML2202A[220kV#2出线合并单元A套PCS-221GB-G]</span></div>
<div class="abs hline" style="left:0px;top:241px;width:1380px"></div>
<div class="abs td" style="left:0px;top:242px;width:31px">9</div>
<div class="abs td" style="left:31px;top:242px;width:168px"><span style="letter-spacing:-0.24px">PISV/SVINGGIO4.AnIn2</span></div>
<div class="abs td" style="left:199px;top:242px;width:231px"><span style="letter-spacing:-0.15px">ML2202A.MUSV/TVTRMUSV.VolChB</span></div>
<div class="abs td" style="left:430px;top:242px;width:99px"><span style="letter-spacing:-0.14px">保护A相电压Ua2</span></div>
<div class="abs td" style="left:529px;top:242px;width:152px"><span style="letter-spacing:-0.09px">级联保护电压A相2</span></div>
<div class="abs td" style="left:681px;top:242px;width:699px"><span style="letter-spacing:-0.34px">ML2202A[220kV#2出线合并单元A套PCS-221GB-G]</span></div>
<div class="abs hline" style="left:0px;top:268px;width:1380px"></div>
<div class="abs td" style="left:0px;top:269px;width:31px"><span style="letter-spacing:-1.00px">10</span></div>
<div class="abs td" style="left:31px;top:269px;width:168px"><span style="letter-spacing:-0.24px">PISV/SVINGGIO4.AnIn3</span></div>
<div class="abs td" style="left:199px;top:269px;width:231px"><span style="letter-spacing:-0.15px">ML2202A.MUSV/TVTRMUSV.Vol</span></div>
<div class="abs td" style="left:430px;top:269px;width:99px"><span style="letter-spacing:-0.14px">保护B相电压Ub1</span></div>
<div class="abs td" style="left:529px;top:269px;width:152px"><span style="letter-spacing:-0.09px">级联保护电压B相1</span></div>
<div class="abs td" style="left:681px;top:269px;width:699px"><span style="letter-spacing:-0.34px">ML2202A[220kV#2出线合并单元A套PCS-221GB-G]</span></div>
<div class="abs hline" style="left:0px;top:295px;width:1380px"></div>
<div class="abs td" style="left:0px;top:296px;width:31px"><span style="letter-spacing:-1.00px">11</span></div>
<div class="abs td" style="left:31px;top:296px;width:168px"><span style="letter-spacing:-0.24px">PISV/SVINGGIO4.AnIn4</span></div>
<div class="abs td" style="left:199px;top:296px;width:231px"><span style="letter-spacing:-0.15px">ML2202A.MUSV/TVTRMUSV.VolChB</span></div>
<div class="abs td" style="left:430px;top:296px;width:99px"><span style="letter-spacing:-0.14px">保护B相电压Ub2</span></div>
<div class="abs td" style="left:529px;top:296px;width:152px"><span style="letter-spacing:-0.09px">级联保护电压B相2</span></div>
<div class="abs td" style="left:681px;top:296px;width:699px"><span style="letter-spacing:-0.34px">ML2202A[220kV#2出线合并单元A套PCS-221GB-G]</span></div>
<div class="abs hline" style="left:0px;top:322px;width:1380px"></div>
<div class="abs vline" style="left:31px;top:26px;height:296px"></div>
<div class="abs vline" style="left:199px;top:26px;height:296px"></div>
<div class="abs vline" style="left:430px;top:26px;height:296px"></div>
<div class="abs vline" style="left:529px;top:26px;height:296px"></div>
<div class="abs vline" style="left:681px;top:26px;height:296px"></div>
<div class="abs" style="left:0;top:26px;width:31px;height:27px;border:1px dotted #8a8a8a"></div>
</div>
<div class="abs" style="left:1652px;top:174px;width:6px;height:323px;background:#d8cec5;border-left:1px solid #8c8680"></div>
<div class="abs" style="left:1653px;top:174px;width:6px;height:14px;background:#fbf9f7;border-bottom:1px solid #a8a098;border-radius:3px 0 0 0"></div>
<div class="abs" style="left:1653px;top:188px;width:6px;height:197px;background:#f8f6f3;border-bottom:1px solid #a8a098"></div>
<div class="abs" style="left:1653px;top:480px;width:6px;height:16px;background:#fbf9f7;border-top:1px solid #a8a098;border-bottom:1px solid #a8a098;border-radius:0 0 0 3px"></div>
<div class="abs" style="left:271px;top:529px;width:1390px;height:6px;background:#efebe7"></div>
<div class="abs" style="left:950px;top:530px;width:40px;height:4px;background:repeating-linear-gradient(90deg,#c8c2bc 0,#c8c2bc 1px,transparent 1px,transparent 2px)"></div>
<div class="abs glabel" style="left:280px;top:546px"><span style="letter-spacing:0.10px">外部SMV控制块列表</span></div>
<div class="abs tblframe" id="t2" style="left:280px;top:564px;width:679px;height:250px">
<div class="abs thdr" style="left:1px;top:0;width:674px;height:26px"><div class="abs th" style="left:0px;width:44px"><b>APPID</b></div><div class="abs thsep" style="left:44px"></div><div class="abs th" style="left:44px;width:291px;padding-left:3px">所在<b>IED</b></div><div class="abs thsep" style="left:335px"></div><div class="abs th" style="left:335px;width:339px;padding-left:3px">数据集描述</div></div>
<div class="abs td" style="left:1px;top:26px;width:44px;padding-left:3px"><span style="letter-spacing:-1.00px">4A0B</span></div>
<div class="abs td" style="left:45px;top:26px;width:291px"><span style="letter-spacing:-0.34px">ML2202A[220kV#2出线合并单元A套PCS-221GB-G]</span></div>
<div class="abs hline" style="left:1px;top:52px;width:675px"></div>
<div class="abs vline" style="left:45px;top:26px;height:26px"></div>
<div class="abs vline" style="left:336px;top:26px;height:26px"></div>
<div class="abs vline" style="left:675px;top:26px;height:26px"></div>
</div>
<div class="abs" style="left:968px;top:535px;width:7px;height:290px;background:#efebe7"></div>
<div class="abs" style="left:969px;top:657px;width:4px;height:40px;background:repeating-linear-gradient(#c8c2bc 0,#c8c2bc 1px,transparent 1px,transparent 2px)"></div>
<div class="abs glabel" style="left:983px;top:546px"><span style="letter-spacing:0.11px">外部SMV通道列表</span></div>
<div class="abs tblframe" id="t3" style="left:983px;top:564px;width:681px;height:250px">
<div class="abs thdr" style="left:1px;top:0;width:659px;height:26px"><div class="abs th" style="left:0px;width:149px">序号</div><div class="abs thsep" style="left:149px"></div><div class="abs th" style="left:149px;width:100px;padding-left:3px">类型</div><div class="abs thsep" style="left:249px"></div><div class="abs th" style="left:249px;width:100px;padding-left:3px">相别</div><div class="abs thsep" style="left:349px"></div><div class="abs th" style="left:349px;width:309px;padding-left:3px">描述</div></div>
<div class="abs td" style="left:1px;top:26px;width:149px;padding-left:3px">1</div>
<div class="abs td" style="left:150px;top:26px;width:100px">时间</div>
<div class="abs td" style="left:250px;top:26px;width:100px"><span style="letter-spacing:-0.40px">--</span></div>
<div class="abs td" style="left:350px;top:26px;width:309px">额定延迟时间</div>
<div class="abs hline" style="left:1px;top:52px;width:659px"></div>
<div class="abs td" style="left:1px;top:53px;width:149px;padding-left:3px">2</div>
<div class="abs td" style="left:150px;top:53px;width:100px">电流</div>
<div class="abs td" style="left:250px;top:53px;width:100px"><span style="letter-spacing:-0.20px">A相</span></div>
<div class="abs td" style="left:350px;top:53px;width:309px"><span style="letter-spacing:-0.17px">保护1电流A相1</span></div>
<div class="abs hline" style="left:1px;top:79px;width:659px"></div>
<div class="abs td" style="left:1px;top:80px;width:149px;padding-left:3px">3</div>
<div class="abs td" style="left:150px;top:80px;width:100px">电流</div>
<div class="abs td" style="left:250px;top:80px;width:100px"><span style="letter-spacing:-0.20px">A相</span></div>
<div class="abs td" style="left:350px;top:80px;width:309px"><span style="letter-spacing:-0.17px">保护1电流A相2</span></div>
<div class="abs hline" style="left:1px;top:106px;width:659px"></div>
<div class="abs td" style="left:1px;top:107px;width:149px;padding-left:3px">4</div>
<div class="abs td" style="left:150px;top:107px;width:100px">电流</div>
<div class="abs td" style="left:250px;top:107px;width:100px"><span style="letter-spacing:-0.20px">B相</span></div>
<div class="abs td" style="left:350px;top:107px;width:309px"><span style="letter-spacing:-0.17px">保护1电流B相1</span></div>
<div class="abs hline" style="left:1px;top:133px;width:659px"></div>
<div class="abs td" style="left:1px;top:134px;width:149px;padding-left:3px">5</div>
<div class="abs td" style="left:150px;top:134px;width:100px">电流</div>
<div class="abs td" style="left:250px;top:134px;width:100px"><span style="letter-spacing:-0.20px">B相</span></div>
<div class="abs td" style="left:350px;top:134px;width:309px"><span style="letter-spacing:-0.17px">保护1电流B相2</span></div>
<div class="abs hline" style="left:1px;top:160px;width:659px"></div>
<div class="abs td" style="left:1px;top:161px;width:149px;padding-left:3px">6</div>
<div class="abs td" style="left:150px;top:161px;width:100px">电流</div>
<div class="abs td" style="left:250px;top:161px;width:100px"><span style="letter-spacing:-0.20px">C相</span></div>
<div class="abs td" style="left:350px;top:161px;width:309px"><span style="letter-spacing:-0.17px">保护1电流C相1</span></div>
<div class="abs hline" style="left:1px;top:187px;width:659px"></div>
<div class="abs td" style="left:1px;top:188px;width:149px;padding-left:3px">7</div>
<div class="abs td" style="left:150px;top:188px;width:100px">电流</div>
<div class="abs td" style="left:250px;top:188px;width:100px"><span style="letter-spacing:-0.20px">C相</span></div>
<div class="abs td" style="left:350px;top:188px;width:309px"><span style="letter-spacing:-0.17px">保护1电流C相2</span></div>
<div class="abs hline" style="left:1px;top:214px;width:659px"></div>
<div class="abs td" style="left:1px;top:215px;width:149px;padding-left:3px">8</div>
<div class="abs td" style="left:150px;top:215px;width:100px">电流</div>
<div class="abs td" style="left:250px;top:215px;width:100px"><span style="letter-spacing:-0.20px">A相</span></div>
<div class="abs td" style="left:350px;top:215px;width:309px"><span style="letter-spacing:-0.12px">测量1电流A相</span></div>
<div class="abs hline" style="left:1px;top:241px;width:659px"></div>
<div class="abs hline" style="left:1px;top:268px;width:659px"></div>
<div class="abs vline" style="left:150px;top:26px;height:230px"></div>
<div class="abs vline" style="left:250px;top:26px;height:230px"></div>
<div class="abs vline" style="left:350px;top:26px;height:230px"></div>
</div>
<div class="abs" style="left:1644px;top:565px;width:15px;height:248px;background:#d8cec5;border-left:1px solid #9c958e"></div>
<div class="abs" style="left:1645px;top:565px;width:14px;height:14px;background:linear-gradient(#fbf9f7,#efe9e3);border-bottom:1px solid #a8a098"></div>
<div class="abs" style="left:1645px;top:580px;width:14px;height:47px;background:linear-gradient(90deg,#faf8f5,#ece6df);border-bottom:1px solid #a8a098"></div>
<div class="abs" style="left:1648px;top:599px;width:7px;height:8px;background:repeating-linear-gradient(#b8b0a8 0,#b8b0a8 1px,transparent 1px,transparent 3px)"></div>
<div class="abs" style="left:1648px;top:570px;width:0;height:0;border-left:4px solid transparent;border-right:4px solid transparent;border-bottom:4.5px solid #000"></div>
<div class="abs" style="left:1645px;top:797px;width:14px;height:15px;background:linear-gradient(#fbf9f7,#efe9e3);border-top:1px solid #a8a098;border-radius:0 0 0 3px"></div>
<div class="abs" style="left:1648px;top:803px;width:0;height:0;border-left:4px solid transparent;border-right:4px solid transparent;border-top:4.5px solid #000"></div>
<div class="abs" style="left:2px;top:834px;width:1655px;height:36px;background:#efeeed"></div>
<div class="abs" style="left:2px;top:841px;width:1655px;height:1px;background:#c4c2c0"></div>
<div class="abs" style="left:2px;top:842px;width:1655px;height:14px;background:#f2f1f0;overflow:hidden"><span class="abs" style="left:5px;top:2px;font-size:12px;line-height:14px;color:#2a2aa8;-webkit-text-stroke:0.35px #2a2aa8;white-space:nowrap">操作过程显示</span></div>
<div class="abs" style="left:1652px;top:847px;width:8px;height:9px;border:1px solid #6a6a6a;border-radius:2px 0 0 0;background:#f4f4f4"></div>
<div class="abs" style="left:2px;top:856px;width:1655px;height:14px;background:#f1efed;border-top:1px solid #d0cecb"></div>
<div class="abs" style="left:20px;top:856px;width:1603px;height:14px;background:linear-gradient(#f2f6fa 0,#e4ecf3 5px,#c4d2dd 10px,#b4c6d2 14px);border-left:1px solid #8a949c;border-right:1px solid #8a949c;border-top:1px solid #6c747a"></div>
<div class="abs" style="left:817px;top:860px;width:6px;height:6px;background:repeating-linear-gradient(90deg,#222 0,#222 1px,transparent 1px,transparent 2px)"></div>
<div class="abs" style="left:8px;top:860px;width:0;height:0;border-top:3.5px solid transparent;border-bottom:3.5px solid transparent;border-right:4px solid #000"></div>
<div class="abs" style="left:1650px;top:860px;width:0;height:0;border-top:3.5px solid transparent;border-bottom:3.5px solid transparent;border-left:4px solid #000"></div>
</div>
</body></html>
